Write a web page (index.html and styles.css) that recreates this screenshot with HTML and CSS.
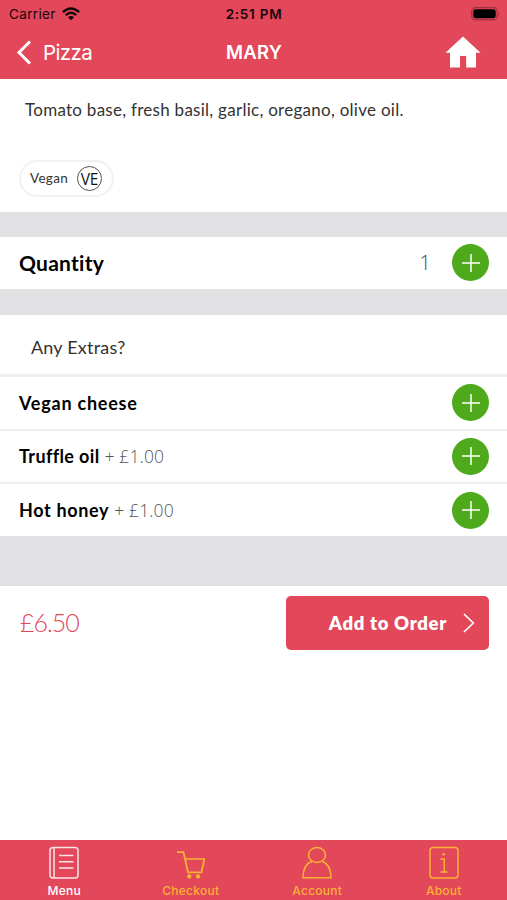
FILE: index.html
```html
<!DOCTYPE html>
<html lang="en">
<head>
<meta charset="utf-8">
<title>Mary</title>
<link rel="stylesheet" href="styles.css">
</head>
<body>
<div class="app">
  <header class="header">
    <div class="status">
      <div class="carrier"><span>Carrier</span>
        <svg width="18" height="14" viewBox="0 0 18 14" fill="none" stroke="#16060a" stroke-width="2.4"><path d="M.9 5.2Q9-2.200 17.100 5.200M3.800 8.200Q9 3.400 14.200 8.200"/><path d="M6 10.200Q9 7.600 12 10.200L9 13.300Z" fill="#16060a" stroke="none"/></svg>
      </div>
      <span class="time">2:51 PM</span>
      <svg class="battery" width="30" height="14" viewBox="0 0 30 14"><rect x=".7" y=".7" width="25.600" height="12.200" rx="3.800" fill="none" stroke="#9e3040" stroke-width="1.200"/><rect x="2.300" y="2.300" width="22.400" height="9" rx="2.400" fill="#000"/><path d="M27.600 5q2.200 1.800 0 3.600z" fill="#9e3040"/></svg>
    </div>
    <nav class="nav">
      <a class="back"><svg width="16" height="25" viewBox="0 0 16 25" fill="none" stroke="#fff" stroke-width="3"><path d="M14 1.500 3 12.500 14 23.500"/></svg><span>Pizza</span></a>
      <h1>MARY</h1>
      <svg class="home" width="36" height="32" viewBox="0 0 36 32" fill="#fff"><path d="M18 .5 35.500 16.800H31V31.500H21.200V20H15V31.500H5V16.800H.5Z"/></svg>
    </nav>
  </header>
  <section class="intro">
    <p><span class="description">Tomato base, fresh basil, garlic, oregano, olive oil.</span></p>
    <div class="pill"><span class="diet">Vegan</span><span class="mark"><b>VE</b></span></div>
  </section>
  <section class="row quantity">
    <h2>Quantity</h2><span class="count">1</span>
    <button class="plus" aria-label="Increase"><svg width="18" height="18" viewBox="0 0 18 18"><path d="M9 0V18M0 9H18"/></svg></button>
  </section>
  <section class="extras">
    <div class="heading"><span>Any Extras?</span></div>
    <div class="row"><span class="name cheese">Vegan cheese</span><button class="plus" aria-label="Add"><svg width="18" height="18" viewBox="0 0 18 18"><path d="M9 0V18M0 9H18"/></svg></button></div>
    <div class="row"><span class="name truffle">Truffle oil</span><span class="extra">+ £1.00</span><button class="plus" aria-label="Add"><svg width="18" height="18" viewBox="0 0 18 18"><path d="M9 0V18M0 9H18"/></svg></button></div>
    <div class="row"><span class="name honey">Hot honey</span><span class="extra">+ £1.00</span><button class="plus" aria-label="Add"><svg width="18" height="18" viewBox="0 0 18 18"><path d="M9 0V18M0 9H18"/></svg></button></div>
  </section>
  <section class="order">
    <span class="total">£6.50</span>
    <button class="add"><span>Add to Order</span><svg width="12" height="20" viewBox="0 0 12 20" fill="none" stroke="#fff" stroke-width="1.700"><path d="M1 1 10.300 10 1 19"/></svg></button>
  </section>
  <footer class="tabs">
    <a class="tab active"><svg width="32" height="34" viewBox="0 0 32 34"><rect x="2" y="1.500" width="28" height="30.500" rx="3"/><path d="M6 2V32M11 9.500H25.500M11 15.700H25.500M11 22H25.500"/></svg><span class="menu">Menu</span></a>
    <a class="tab cart"><svg width="32" height="34" viewBox="0 0 32 34"><path d="M2 6.200H8.500L13 26.300H26.500L29.300 13H10"/><circle cx="14.300" cy="30.500" r="1.300" fill="currentColor"/><circle cx="23" cy="30.500" r="1.300" fill="currentColor"/></svg><span class="checkout">Checkout</span></a>
    <a class="tab"><svg width="32" height="34" viewBox="0 0 32 34"><ellipse cx="16" cy="9" rx="8.500" ry="7.500"/><path d="M11 15.300C5 17.500 2 22 2 31.700H30C30 22 27 17.500 21 15.300"/></svg><span class="account">Account</span></a>
    <a class="tab"><svg width="32" height="34" viewBox="0 0 32 34"><rect x="2" y="1.500" width="28" height="30.500" rx="3"/><path d="M12.500 13H16.300V26M12.500 26H19.500"/><circle cx="15.800" cy="8.300" r="1.300" fill="currentColor" stroke="none"/></svg><span class="about">About</span></a>
  </footer>
</div>
</body>
</html>
```
FILE: styles.css
```css
* { box-sizing: border-box; }
body { margin: 0; font-family: Lato, sans-serif; color: #000; }
h1, h2, p { margin: 0; }
button { border: 0; padding: 0; font: inherit; }
svg { flex: none; display: block; }
span { white-space: nowrap; }
.app { width: 507px; height: 900px; display: flex; flex-direction: column; background: #e1e1e3; overflow: hidden; }
.header { height: 79px; background: #e3475a; font-family: Inter, sans-serif; }
.status { height: 27px; display: grid; grid-template-columns: 1fr auto 1fr; align-items: center; padding: 0 6px 0 9px; font-size: 13.500px; color: #16060a; }
.carrier { display: flex; gap: 6px; align-items: center; letter-spacing: .35px; }
.time { font-weight: 600; letter-spacing: .75px; margin-right: 2px; }
.battery { justify-self: end; }
.nav { height: 50px; display: grid; grid-template-columns: 1fr auto 1fr; align-items: center; padding: 0 26px 0 16px; color: #fff; }
.back { display: flex; align-items: center; gap: 11px; font-size: 20.500px; letter-spacing: -.6px; }
h1 { font-size: 18.500px; font-weight: 600; margin-left: 11px; letter-spacing: .2px; }
.home { justify-self: end; }
.intro { height: 133px; background: #fff; padding: 20px 19px 0; }
.intro p { height: 61px; padding-left: 6px; font-size: 17px; line-height: 22px; color: #333; letter-spacing: .27px; }
.pill { width: 95px; height: 37px; border: 2px solid #f1f1f1; border-radius: 19px; display: flex; align-items: center; justify-content: space-between; padding: 0 10px 0 9px; font-size: 13.500px; color: #333; }
.diet { letter-spacing: .3px; padding-bottom: 2px; }
.mark { width: 25px; height: 25px; border: 1px solid #555; border-radius: 50%; display: grid; place-items: center; font: 15.500px/22px "Open Sans", sans-serif; letter-spacing: -.3px; color: #111; }
.mark b { font-weight: 500; }
.row { height: 54px; background: #fff; display: flex; align-items: center; padding: 0 18px 0 19px; border-bottom: 2px solid #efefef; }
.quantity { height: 52.500px; border: 0; margin: 24.500px 0 26px; flex: none; }
h2 { font-size: 21px; font-weight: 700; letter-spacing: .25px; padding-bottom: 1px; }
.count { margin-left: auto; margin-right: 21px; font: 300 20px "Open Sans", sans-serif; color: #444; }
.plus { width: 37px; height: 37px; border-radius: 50%; background: #4ea91b; display: grid; place-items: center; margin-left: auto; flex: none; }
.count + .plus { margin-left: 0; }
.plus path { stroke: #fff; stroke-width: 1.500px; }
.extras { height: 221px; background: #fff; flex: none; }
.extras .row { height: 53.500px; }
.extras .row:last-child { height: 52px; border: 0; }
.extras { height: 220.500px; }
.heading { height: 62px; border-bottom: 3px solid #efefef; padding: 5px 0 0 31px; display: flex; align-items: center; font-size: 18px; color: #333; letter-spacing: .2px; }
.name { font-size: 18px; font-weight: 700; }
.cheese { letter-spacing: .77px; }
.truffle { letter-spacing: .35px; }
.honey { letter-spacing: .65px; }
.extra { font: 300 17.500px "Open Sans", sans-serif; color: #555; margin-left: 5px; letter-spacing: .15px; }
.order { height: 254px; margin-top: 50px; background: #fff; padding: 10px 18px 0 20px; display: flex; align-items: flex-start; justify-content: space-between; flex: none; }
.total { font-size: 25px; font-weight: 300; line-height: 52px; color: #e3475a; letter-spacing: -1px; }
.add { width: 203px; height: 54px; background: #e3475a; color: #fff; border-radius: 5px; display: flex; align-items: center; justify-content: flex-end; gap: 16px; padding-right: 14px; font-size: 18.500px; font-weight: 800; letter-spacing: .68px; }
.tabs { height: 60px; background: #e3475a; display: grid; grid-template-columns: repeat(4, 1fr); flex: none; padding: 6px 0 0 1px; }
.tab { display: flex; flex-direction: column; align-items: center; color: #f9b233; font: 500 12px/14px Inter, sans-serif; gap: 4px; letter-spacing: .25px; }
.tab.active { color: #fff; }
.tab svg { fill: none; stroke: currentColor; stroke-width: 1.500px; }
.tab.active svg { opacity: .85; }
.cart svg { stroke-width: 1.700px; }
```
